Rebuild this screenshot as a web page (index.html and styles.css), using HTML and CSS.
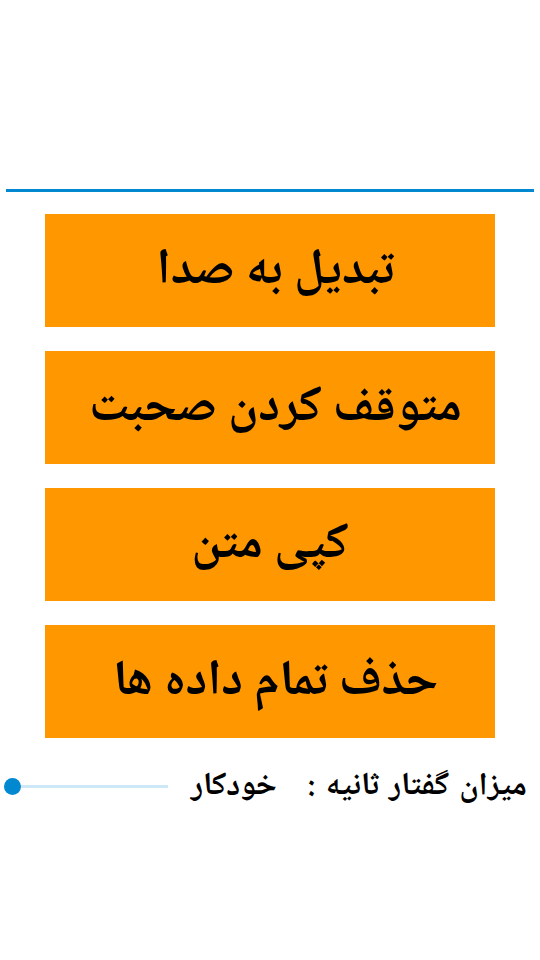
FILE: index.html
```html
<!DOCTYPE html>
<html lang="fa" dir="rtl">
<head>
<meta charset="utf-8">
<link rel="stylesheet" href="styles.css">
</head>
<body>
<div class="page">
  <div class="top-space"></div>
  <div class="divider"></div>
  <div class="buttons">
    <div class="btn">تبدیل به صدا&nbsp;</div>
    <div class="btn">متوقف کردن صحبت&nbsp;</div>
    <div class="btn">کپی متن</div>
    <div class="btn">حذف تمام داده ها&nbsp;</div>
  </div>
  <div class="rate-row">
    <div class="rate-label">میزان گفتار ثانیه :&nbsp;&nbsp; خودکار</div>
    <div class="slider">
      <div class="track"></div>
      <div class="thumb"></div>
    </div>
  </div>
</div>
</body>
</html>
```
FILE: styles.css
```css
html, body {
  margin: 0;
  padding: 0;
  background: #ffffff;
}
body {
  font-family: "Noto Naskh Arabic UI", "Noto Naskh Arabic", "Noto Sans Arabic", "DejaVu Sans", sans-serif;
  width: 540px;
  height: 960px;
  overflow: hidden;
}
.page {
  display: flex;
  flex-direction: column;
}
.top-space {
  height: 189px;
}
.divider {
  height: 3px;
  margin: 0 6px;
  background: #0288d1;
}
.buttons {
  display: flex;
  flex-direction: column;
  gap: 24px;
  margin-top: 22px;
  padding: 0 45px;
}
.btn {
  height: 113px;
  background: #ff9800;
  color: #000;
  font-weight: bold;
  font-size: 50px;
  display: flex;
  align-items: center;
  justify-content: center;
}
.rate-row {
  display: flex;
  flex-direction: row;
  align-items: center;
  justify-content: space-between;
  margin-top: 28px;
  height: 40px;
  padding: 0 13px 0 4px;
}
.rate-label {
  font-weight: bold;
  font-size: 32px;
  word-spacing: 3px;
  color: #000;
  white-space: nowrap;
}
.slider {
  position: relative;
  width: 164px;
  height: 20px;
  display: flex;
  align-items: center;
}
.track {
  width: 100%;
  height: 3px;
  background: #cde8f6;
}
.thumb {
  position: absolute;
  left: 0;
  top: 2px;
  width: 17px;
  height: 17px;
  border-radius: 50%;
  background: #0288d1;
}
```
